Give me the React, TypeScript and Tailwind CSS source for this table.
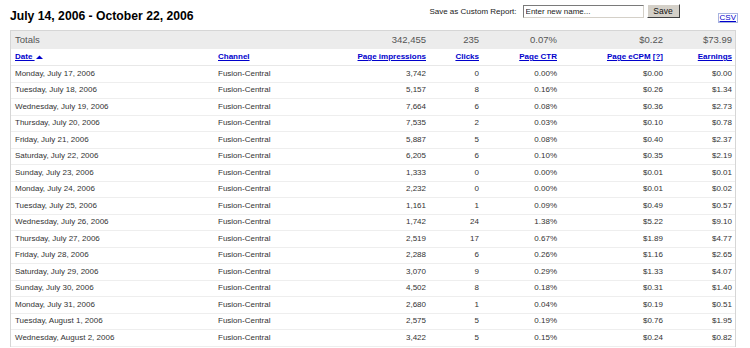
import React from "react";

const rows: [string, string, string, string, string, string][] = [
  ["Monday, July 17, 2006", "3,742", "0", "0.00%", "$0.00", "$0.00"],
  ["Tuesday, July 18, 2006", "5,157", "8", "0.16%", "$0.26", "$1.34"],
  ["Wednesday, July 19, 2006", "7,664", "6", "0.08%", "$0.36", "$2.73"],
  ["Thursday, July 20, 2006", "7,535", "2", "0.03%", "$0.10", "$0.78"],
  ["Friday, July 21, 2006", "5,887", "5", "0.08%", "$0.40", "$2.37"],
  ["Saturday, July 22, 2006", "6,205", "6", "0.10%", "$0.35", "$2.19"],
  ["Sunday, July 23, 2006", "1,333", "0", "0.00%", "$0.01", "$0.01"],
  ["Monday, July 24, 2006", "2,232", "0", "0.00%", "$0.01", "$0.02"],
  ["Tuesday, July 25, 2006", "1,161", "1", "0.09%", "$0.49", "$0.57"],
  ["Wednesday, July 26, 2006", "1,742", "24", "1.38%", "$5.22", "$9.10"],
  ["Thursday, July 27, 2006", "2,519", "17", "0.67%", "$1.89", "$4.77"],
  ["Friday, July 28, 2006", "2,288", "6", "0.26%", "$1.16", "$2.65"],
  ["Saturday, July 29, 2006", "3,070", "9", "0.29%", "$1.33", "$4.07"],
  ["Sunday, July 30, 2006", "4,502", "8", "0.18%", "$0.31", "$1.40"],
  ["Monday, July 31, 2006", "2,680", "1", "0.04%", "$0.19", "$0.51"],
  ["Tuesday, August 1, 2006", "2,575", "5", "0.19%", "$0.76", "$1.95"],
  ["Wednesday, August 2, 2006", "3,422", "5", "0.15%", "$0.24", "$0.82"],
];

const font = { fontFamily: '"Liberation Sans", Arial, sans-serif' };

function Link({ children }: { children: React.ReactNode }) {
  return <span className="text-[#0000cc] underline font-bold cursor-pointer">{children}</span>;
}

export default function App() {
  return (
    <div className="w-[750px] h-[348px] bg-white overflow-hidden text-[#333]" style={font}>
      <div className="flex h-[30px]">
        <div className="pl-[10px] pt-[9px] text-[12.2px] leading-[14px] font-bold text-black">
          July 14, 2006 - October 22, 2006
        </div>
        <div className="ml-auto flex items-start pt-[5px]">
          <span className="text-[8px] leading-[13px] text-[#222] mr-[6px]">Save as Custom Report:</span>
          <input
            className="w-[121px] h-[13px] border border-t-[#7a7a7a] border-l-[#7a7a7a] border-b-[#d4d0c8] border-r-[#d4d0c8] text-[8px] px-[2px] text-[#222] placeholder:text-[#222] outline-none"
            placeholder="Enter new name..."
          />
          <button className="ml-[3px] w-[33px] h-[14px] -mt-[1px] bg-[#d4d0c8] border border-t-white border-l-white border-b-[#404040] border-r-[#404040] text-[8.5px] leading-[11px] text-[#111]">
            Save
          </button>
          <span className="ml-[38px] mr-[12px] mt-[8px] text-[8px] leading-[8px] text-[#0000cc] underline border border-[#a8b4e0] px-[1px]">
            CSV
          </span>
        </div>
      </div>
      <div className="ml-[10px] w-[726px] border-x border-t border-[#d6d6d6]">
        <div className="flex h-[18px] bg-[#ececec] items-center text-[9.5px] text-[#555]">
          <div className="w-[202px] pl-[4px]">Totals</div>
          <div className="w-[87px]"></div>
          <div className="w-[130px] text-right pr-[4px]">342,455</div>
          <div className="w-[53px] text-right pr-[4px]">235</div>
          <div className="w-[78px] text-right pr-[4px]">0.07%</div>
          <div className="w-[106px] text-right pr-[4px]">$0.22</div>
          <div className="w-[68px] text-right pr-[3px]">$73.99</div>
        </div>
        <div className="flex h-[17px] items-center text-[8px] border-b border-[#e8e8e8]">
          <div className="w-[202px] pl-[4px] flex items-center">
            <span className="text-[#0000cc] underline font-bold cursor-pointer whitespace-pre">Date </span>
            <svg width="7" height="5" viewBox="0 0 7 5" className="ml-[1px]">
              <polygon points="0,4 3.5,0.5 7,4" fill="#0000cc" />
            </svg>
          </div>
          <div className="w-[87px] pl-[5px]"><Link>Channel</Link></div>
          <div className="w-[130px] text-right pr-[4px]"><Link>Page impressions</Link></div>
          <div className="w-[53px] text-right pr-[4px]"><Link>Clicks</Link></div>
          <div className="w-[78px] text-right pr-[4px]"><Link>Page CTR</Link></div>
          <div className="w-[106px] text-right pr-[4px]">
            <Link>Page eCPM</Link>
            <span className="font-bold text-[#0000cc]"> [<span className="underline">?</span>]</span>
          </div>
          <div className="w-[68px] text-right pr-[3px]"><Link>Earnings</Link></div>
        </div>
        {rows.map((r) => (
          <div key={r[0]} className="flex h-[16.5px] items-center text-[8px] border-b border-[#eeeeee]">
            <div className="w-[202px] pl-[4px]">{r[0]}</div>
            <div className="w-[87px] pl-[5px]">Fusion-Central</div>
            <div className="w-[130px] text-right pr-[4px]">{r[1]}</div>
            <div className="w-[53px] text-right pr-[4px]">{r[2]}</div>
            <div className="w-[78px] text-right pr-[4px]">{r[3]}</div>
            <div className="w-[106px] text-right pr-[4px]">{r[4]}</div>
            <div className="w-[68px] text-right pr-[3px]">{r[5]}</div>
          </div>
        ))}
      </div>
    </div>
  );
}
